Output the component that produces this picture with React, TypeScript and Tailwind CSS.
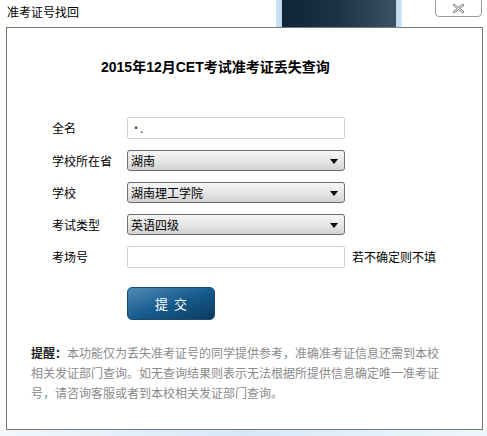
import React from "react";

const font = { fontFamily: '"Noto Sans CJK SC", "Liberation Sans", sans-serif' };

function Select({ value }: { value: string }) {
  return (
    <div className="relative flex h-[21px] w-[218px] items-center rounded-[3px] border border-[#6f6f6f] bg-gradient-to-b from-[#f6f6f6] via-[#e6e6e6] to-[#d2d2d2] pl-[3px] text-[12px] text-black">
      <span className="leading-none">{value}</span>
      <svg className="absolute right-[6px] top-[8px]" width="8" height="5" viewBox="0 0 8 5">
        <polygon points="0,0 8,0 4,5" fill="#000" />
      </svg>
    </div>
  );
}

function Input({ value }: { value?: string }) {
  return (
    <div className="flex h-[22px] w-[218px] items-center rounded-[2px] border border-[#cfd3d6] bg-white pl-[2px] text-[12px] leading-none tracking-[-2px] text-[#444]">
      {value}
    </div>
  );
}

function Row({ label, children, extra, mt }: { label: string; children: React.ReactNode; extra?: string; mt: string }) {
  return (
    <div className={`flex items-center ${mt}`}>
      <div className="w-[75px] pl-[45px] text-[12px] leading-none text-black box-content">{label}</div>
      {children}
      {extra && <div className="ml-[7px] text-[12px] leading-none text-black">{extra}</div>}
    </div>
  );
}

export default function App() {
  return (
    <div className="relative h-[436px] w-[487px] overflow-hidden bg-white" style={font}>
      {/* desktop glimpse behind title bar */}
      <div className="absolute left-[276px] top-0 h-[27px] w-[126px] bg-gradient-to-r from-[#cfeaff] via-[#0f2a3e] to-[#cfeaff]" />
      <div className="absolute left-[282px] top-0 h-[27px] w-[114px] bg-gradient-to-r from-[#0d2538] via-[#1c3447] to-[#3a5262]" />
      {/* close button */}
      <div className="absolute left-[435px] top-[-3px] flex h-[20px] w-[47px] items-center justify-center rounded-b-[4px] border border-[#9a9a9a] bg-white pt-[3px]">
        <svg width="11" height="9" viewBox="0 0 11 9">
          <path d="M1 1 L10 8 M10 1 L1 8" stroke="#8a8a8a" strokeWidth="2.6" strokeLinecap="square" />
          <path d="M1 1 L10 8 M10 1 L1 8" stroke="#fff" strokeWidth="0.9" />
        </svg>
      </div>

      <div className="relative flex h-[27px] items-start pl-[7px] pt-[5px] text-[12px] leading-[14px] text-black">准考证号找回</div>

      <div className="ml-[6px] flex h-[403px] w-[477px] flex-col border border-[#777]">
        <div className="mt-[29px] pl-[94px] text-[14px] font-bold leading-[20px] text-black" style={{ fontFamily: '"Liberation Sans", "Noto Sans CJK SC", sans-serif' }}>
          2015年12月CET考试准考证丢失查询
        </div>

        <Row label="全名" mt="mt-[40px]">
          <Input value="·." />
        </Row>
        <Row label="学校所在省" mt="mt-[11px]">
          <Select value="湖南" />
        </Row>
        <Row label="学校" mt="mt-[11px]">
          <Select value="湖南理工学院" />
        </Row>
        <Row label="考试类型" mt="mt-[11px]">
          <Select value="英语四级" />
        </Row>
        <Row label="考场号" mt="mt-[11px]" extra="若不确定则不填">
          <Input />
        </Row>

        <div className="ml-[120px] mt-[19px] flex h-[33px] w-[88px] items-center justify-center rounded-[5px] border border-[#1d4a6e] bg-gradient-to-br from-[#4f8ab5] via-[#175d8f] to-[#0b3a5e] text-[13px] text-white">
          <span>提</span>
          <span className="ml-[6px]">交</span>
        </div>

        <div className="ml-[24px] mt-[23px] text-[12px] leading-[20px] text-[#8a8a8a]">
          <div>
            <span className="font-bold text-[#222]">提醒：</span>本功能仅为丢失准考证号的同学提供参考，准确准考证信息还需到本校
          </div>
          <div>相关发证部门查询。如无查询结果则表示无法根据所提供信息确定唯一准考证</div>
          <div>号，请咨询客服或者到本校相关发证部门查询。</div>
        </div>
      </div>

      <div className="h-[6px] w-full bg-gradient-to-r from-[#f2f8fc] via-[#d6e8f8] to-[#eef8fc]" />
    </div>
  );
}
